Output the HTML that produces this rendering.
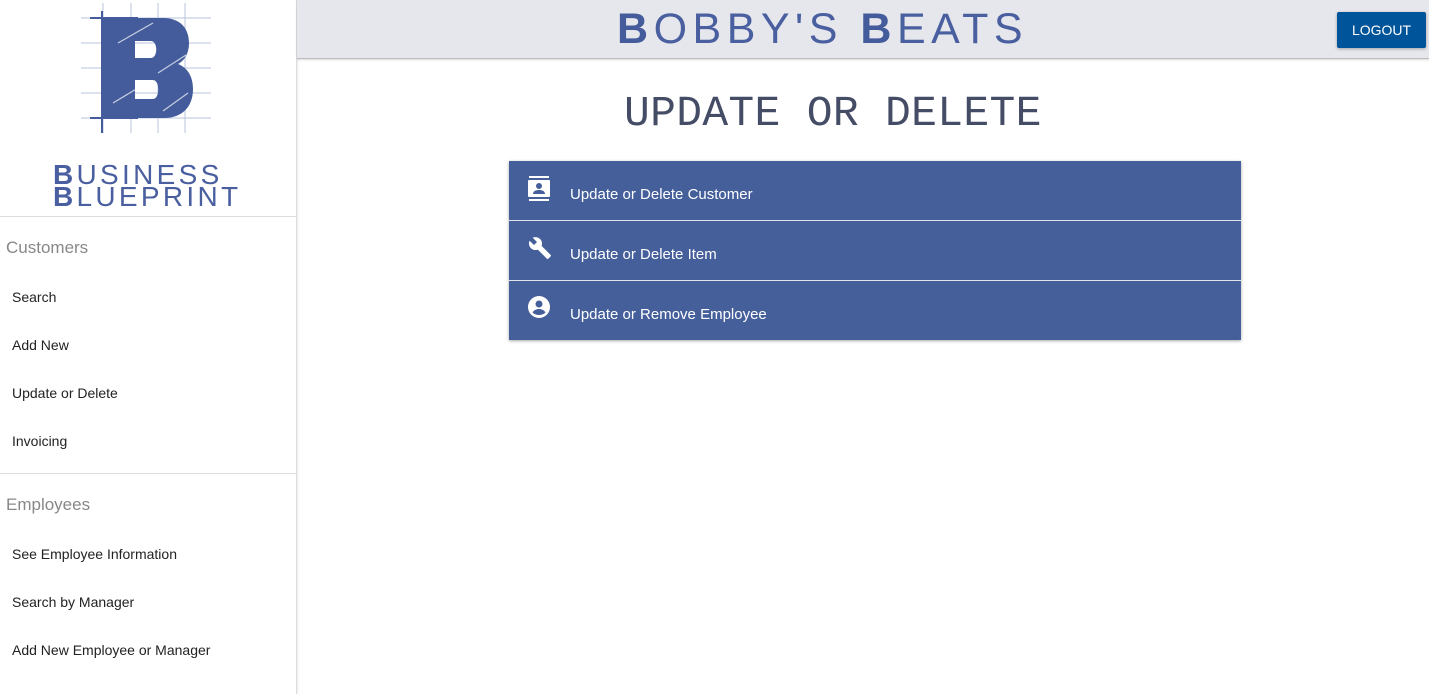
<!DOCTYPE html>
<html><head><style>
body{margin:0;width:1429px;height:694px;overflow:hidden;font-family:"Segoe UI","Liberation Sans",sans-serif;background:#fff;position:relative}
.side{position:absolute;left:0;top:0;width:296px;height:694px;border-right:1px solid #ddd;box-shadow:1px 0 2px rgba(0,0,0,.08);background:#fff}
.hdr{position:absolute;left:297px;top:0;right:0;height:58px;background:#e6e7ec;border-bottom:1px solid #bbb;box-shadow:0 1px 2px rgba(0,0,0,.15)}
.brand{position:absolute;left:617px;top:8px;font-family:"Liberation Sans",sans-serif;font-size:43px;line-height:43px;color:#4a5fa0;letter-spacing:5.5px;font-weight:300}
.brand b{font-weight:900;color:#445c9c}
.btn{position:absolute;left:1337px;top:12px;width:89px;height:36px;background:#005499;color:#fff;font-size:14px;line-height:36px;text-align:center;border-radius:2px;box-shadow:0 1px 3px rgba(0,0,0,.3)}
h1{position:absolute;left:624px;top:87px;margin:0;font-family:"Liberation Mono",monospace;font-weight:normal;font-size:43px;line-height:54px;color:#454d66;letter-spacing:0.3px}
.list{position:absolute;left:509px;top:161px;width:732px;box-shadow:0 1px 3px rgba(0,0,0,.35)}
.row{height:59px;background:#455f9b;color:#fff;font-size:15px;position:relative;border-bottom:1px solid #dfe3ec}
.row:last-child{border-bottom:none;height:59px}
.row span{position:absolute;left:61px;top:25px}
.row svg{position:absolute;left:19px;top:15px}
.sec{position:absolute;left:6px;font-size:17px;color:#888}
.it{position:absolute;left:12px;font-size:14px;color:#222}
.hr{position:absolute;left:0;width:296px;height:1px;background:#ddd}
.lt{position:absolute;font-family:"Liberation Sans",sans-serif;color:#4a5fa0;font-size:28px;line-height:22px;letter-spacing:3.3px;font-weight:300}
</style></head><body>
<div class="side">
<svg style="position:absolute;left:78px;top:3px" width="136" height="134" viewBox="0 0 136 134">
<g stroke="#b9c3de" stroke-width="1">
<line x1="25" y1="0" x2="25" y2="130"/><line x1="53" y1="0" x2="53" y2="130"/><line x1="80" y1="0" x2="80" y2="130"/><line x1="107" y1="0" x2="107" y2="130"/>
<line x1="3" y1="15" x2="133" y2="15"/><line x1="3" y1="40" x2="133" y2="40"/><line x1="3" y1="65" x2="133" y2="65"/><line x1="3" y1="90" x2="133" y2="90"/><line x1="3" y1="115" x2="133" y2="115"/>
</g>
<line x1="24" y1="8" x2="24" y2="130" stroke="#445c9c" stroke-width="2"/>
<line x1="12" y1="15" x2="60" y2="15" stroke="#445c9c" stroke-width="2"/>
<line x1="12" y1="115" x2="60" y2="115" stroke="#445c9c" stroke-width="2"/>
<path fill="#445c9c" fill-rule="evenodd" d="M25 15H85C103 15 111 26 111 40C111 51 106 58 100 61C110 65 115 74 115 86C115 104 104 115 86 115H25Z M57 38V55H73C80 55 80 38 73 38Z M57 77V96H75C82 96 82 77 75 77Z"/>
<g stroke="#fff" stroke-width="1.2" opacity=".7"><line x1="40" y1="40" x2="75" y2="20"/><line x1="80" y1="70" x2="108" y2="52"/><line x1="35" y1="100" x2="60" y2="85"/><line x1="85" y1="108" x2="110" y2="90"/></g>
</svg>
<div class="lt" style="left:53px;top:164px"><b style="font-weight:900">B</b>USINESS</div>
<div class="lt" style="left:53px;top:186px"><b style="font-weight:900">B</b>LUEPRINT</div>
<div class="hr" style="top:216px"></div>
<div class="sec" style="top:238px">Customers</div>
<div class="it" style="top:289px">Search</div>
<div class="it" style="top:337px">Add New</div>
<div class="it" style="top:385px">Update or Delete</div>
<div class="it" style="top:433px">Invoicing</div>
<div class="hr" style="top:473px"></div>
<div class="sec" style="top:495px">Employees</div>
<div class="it" style="top:546px">See Employee Information</div>
<div class="it" style="top:594px">Search by Manager</div>
<div class="it" style="top:642px">Add New Employee or Manager</div>
</div>
<div class="hdr"></div>
<div class="brand"><b>B</b>OBBY'S <b>B</b>EATS</div>
<div class="btn">LOGOUT</div>
<h1>UPDATE OR DELETE</h1>
<div class="list">
<div class="row"><svg width="22" height="26" viewBox="0 0 22 26"><rect x="1" y="0" width="20" height="2" fill="#fff"/><rect x="1" y="23" width="20" height="2" fill="#fff"/><rect x="0" y="4" width="22" height="17" rx="1" fill="#fff"/><circle cx="11" cy="10" r="3" fill="#455f9b"/><path d="M5 18c0-3 3-4 6-4s6 1 6 4z" fill="#455f9b"/></svg><span>Update or Delete Customer</span></div>
<div class="row"><svg width="24" height="24" viewBox="0 0 24 24"><path fill="#fff" d="M22.7 19l-9.1-9.1c.9-2.3.4-5-1.5-6.9-2-2-5-2.4-7.4-1.3L9 6 6 9 1.6 4.7C.4 7.1.9 10.1 2.9 12.1c1.9 1.9 4.6 2.4 6.9 1.5l9.1 9.1c.4.4 1 .4 1.4 0l2.3-2.3c.5-.4.5-1.1.1-1.4z"/></svg><span>Update or Delete Item</span></div>
<div class="row"><svg width="22" height="22" viewBox="0 0 22 22"><circle cx="11" cy="11" r="11" fill="#fff"/><circle cx="11" cy="8" r="3.5" fill="#455f9b"/><path d="M4.5 16.5c1.5-2.5 4-3.5 6.5-3.5s5 1 6.5 3.5c-1.7 1.7-4 2.5-6.5 2.5s-4.8-.8-6.5-2.5z" fill="#455f9b"/></svg><span>Update or Remove Employee</span></div>
</div>
</body></html>
